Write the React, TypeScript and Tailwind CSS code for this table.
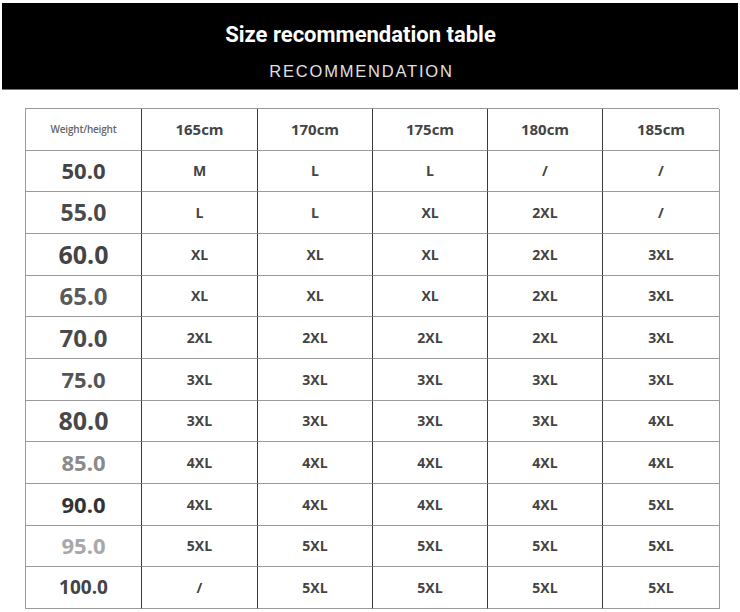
import React from "react";

const heights = ["165cm", "170cm", "175cm", "180cm", "185cm"];

const rows: { weight: string; size: string; color: string; sizes: string[] }[] = [
  { weight: "50.0", size: "text-[22px]", color: "text-[#444]", sizes: ["M", "L", "L", "/", "/"] },
  { weight: "55.0", size: "text-[23px]", color: "text-[#4a4a4a]", sizes: ["L", "L", "XL", "2XL", "/"] },
  { weight: "60.0", size: "text-[25px]", color: "text-[#444]", sizes: ["XL", "XL", "XL", "2XL", "3XL"] },
  { weight: "65.0", size: "text-[24px]", color: "text-[#5a5a5a]", sizes: ["XL", "XL", "XL", "2XL", "3XL"] },
  { weight: "70.0", size: "text-[24px]", color: "text-[#4a4a4a]", sizes: ["2XL", "2XL", "2XL", "2XL", "3XL"] },
  { weight: "75.0", size: "text-[22px]", color: "text-[#555]", sizes: ["3XL", "3XL", "3XL", "3XL", "3XL"] },
  { weight: "80.0", size: "text-[25px]", color: "text-[#484848]", sizes: ["3XL", "3XL", "3XL", "3XL", "4XL"] },
  { weight: "85.0", size: "text-[22px]", color: "text-[#8a8a8a]", sizes: ["4XL", "4XL", "4XL", "4XL", "4XL"] },
  { weight: "90.0", size: "text-[22px]", color: "text-[#333]", sizes: ["4XL", "4XL", "4XL", "4XL", "5XL"] },
  { weight: "95.0", size: "text-[22px]", color: "text-[#a8a8a8]", sizes: ["5XL", "5XL", "5XL", "5XL", "5XL"] },
  { weight: "100.0", size: "text-[19px]", color: "text-[#444]", sizes: ["/", "5XL", "5XL", "5XL", "5XL"] },
];

const cell = "flex items-center justify-center border-b border-b-[#9a9a9a]";

export default function App() {
  return (
    <div className="w-[740px] h-[612px] bg-white overflow-hidden font-['Open_Sans',sans-serif]">
      <div className="mx-[2px] mt-[3px] h-[87px] pr-[19px] bg-black border-b border-[#777] flex flex-col items-center">
        <h1 className="mt-[17px] text-white text-[22px] font-bold leading-[30px] font-['Roboto',sans-serif]">
          Size recommendation table
        </h1>
        <p className="mt-[11px] pl-[2px] text-[#e0e0e0] text-[16.5px] leading-[20px] tracking-[1.8px] font-['Liberation_Sans',sans-serif]">
          RECOMMENDATION
        </p>
      </div>

      <div className="ml-[25px] mt-[18px] w-[694px] h-[501px] border-t border-l border-[#9a9a9a] grid grid-cols-[116px_116px_115px_115px_115px_117px] grid-rows-[repeat(12,minmax(0,1fr))]">
        <div className={`${cell} border-r border-r-[#3a3a3a] text-[10px] font-semibold text-[#666] tracking-[-0.2px]`}>
          Weight/height
        </div>
        {heights.map((h, i) => (
          <div
            key={h}
            className={`${cell} border-r ${i === 4 ? "border-r-[#9a9a9a]" : "border-r-[#3a3a3a]"} text-[15px] font-bold text-[#444]`}
          >
            {h}
          </div>
        ))}

        {rows.map((r) => (
          <React.Fragment key={r.weight}>
            <div className={`${cell} border-r border-r-[#3a3a3a] font-bold ${r.size} ${r.color}`}>
              {r.weight}
            </div>
            {r.sizes.map((s, i) => (
              <div
                key={i}
                className={`${cell} border-r ${i === 4 ? "border-r-[#9a9a9a]" : "border-r-[#3a3a3a]"} text-[14px] font-bold text-[#444]`}
              >
                {s}
              </div>
            ))}
          </React.Fragment>
        ))}
      </div>
    </div>
  );
}
